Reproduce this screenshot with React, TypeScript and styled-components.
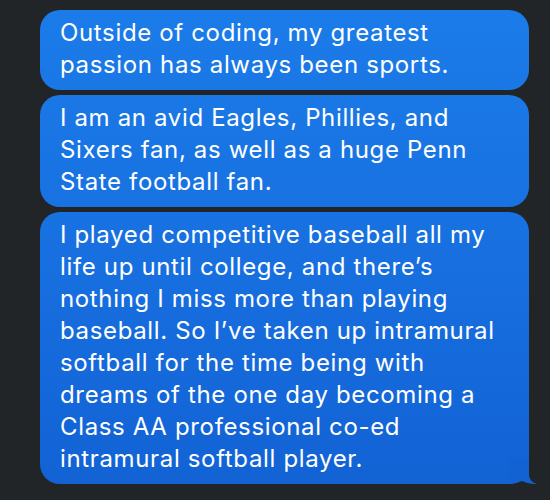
import React from "react";
import styled, { createGlobalStyle } from "styled-components";

const Global = createGlobalStyle`
  html, body { margin: 0; padding: 0; background: #222528; }
  body { font-family: Inter, "Open Sans", "Liberation Sans", sans-serif; }
`;

const Thread = styled.div`
  width: 550px;
  height: 500px;
  box-sizing: border-box;
  padding: 10px 21px 0 40px;
  display: flex;
  flex-direction: column;
  gap: 5px;
  background: #222528;
`;

const Bubble = styled.div`
  position: relative;
  box-sizing: border-box;
  padding: 7px 12px 9px 20px;
  border-radius: 20px;
  background: linear-gradient(180deg, #1b7ce9 0px, #1870e0 250px, #1262d4 490px);
  background-attachment: fixed;
  color: #ffffff;
  font-size: 24px;
  line-height: 32px;
  letter-spacing: 0.65px;
  white-space: nowrap;
`;

const Tail = styled.svg`
  position: absolute;
  right: -8px;
  bottom: 0;
  width: 28px;
  height: 26px;
`;

const messages: string[][] = [
  ["Outside of coding, my greatest", "passion has always been sports."],
  ["I am an avid Eagles, Phillies, and", "Sixers fan, as well as a huge Penn", "State football fan."],
  [
    "I played competitive baseball all my",
    "life up until college, and there\u2019s",
    "nothing I miss more than playing",
    "baseball. So I\u2019ve taken up intramural",
    "softball for the time being with",
    "dreams of the one day becoming a",
    "Class AA professional co-ed",
    "intramural softball player.",
  ],
];

export default function App() {
  return (
    <>
      <Global />
      <Thread>
        {messages.map((lines, i) => {
          const last = i === messages.length - 1;
          return (
            <Bubble key={i}>
              {lines.map((l, j) => (
                <React.Fragment key={j}>
                  {l}
                  {j < lines.length - 1 && <br />}
                </React.Fragment>
              ))}
              {last && (
                <Tail viewBox="0 0 28 26">
                  <path
                    d="M0 0 L20 0 L20 17 Q20.5 24 28 26 Q20 26.5 13 23 Q7 26 0 26 Z"
                    fill="#1262d4"
                  />
                </Tail>
              )}
            </Bubble>
          );
        })}
      </Thread>
    </>
  );
}
